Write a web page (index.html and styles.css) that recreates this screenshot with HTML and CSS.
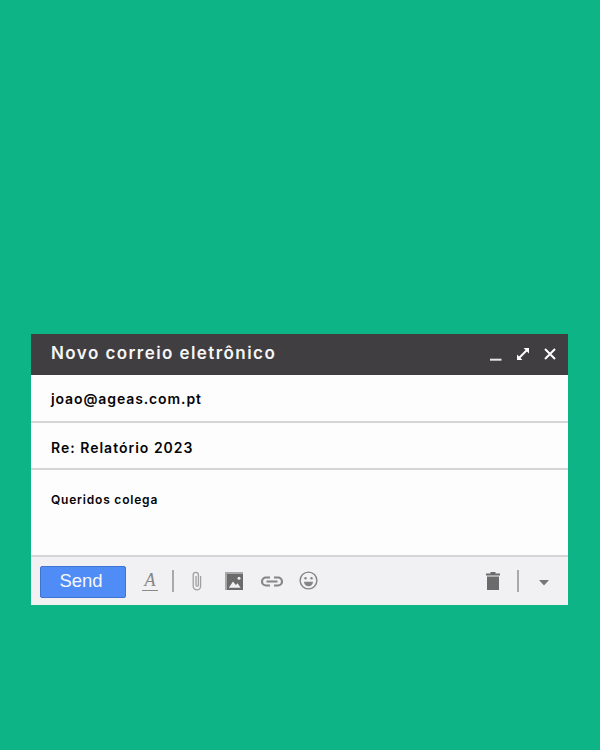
FILE: index.html
```html
<!DOCTYPE html>
<html lang="pt">
<head>
<meta charset="utf-8">
<title>Novo correio eletrônico</title>
<link rel="stylesheet" href="styles.css">
</head>
<body>
<main class="stage">
  <section class="compose">
    <header class="titlebar">
      <h1 class="title">Novo correio eletrônico</h1>
      <div class="winctl">
        <svg class="ctl" width="14" height="14" viewBox="0 0 14 14"><path d="M1 12.700h11.500" stroke="#e6e6e6" stroke-width="2"/></svg>
        <svg class="ctl" width="14" height="14" viewBox="0 0 14 14"><path d="M3 11 11 3" stroke="#fff" stroke-width="2"/><path d="M7.600 1h5.400v5.400zM1 7.600V13h5.400z" fill="#fff"/></svg>
        <svg class="ctl" width="14" height="14" viewBox="0 0 14 14"><path d="M2 2l10 10M12 2 2 12" stroke="#fff" stroke-width="2"/></svg>
      </div>
    </header>
    <div class="field field-to">joao@ageas.com.pt</div>
    <div class="field field-subject">Re: Relatório 2023</div>
    <div class="body-text">Queridos colega</div>
    <footer class="toolbar">
      <button class="send">Send</button>
      <span class="format">A</span>
      <span class="sep sep-a"></span>
      <svg class="ic ic-clip" width="14" height="22" viewBox="0 0 14 22"><path d="M10.600 6v10.200a3.700 3.700 0 0 1-7.400 0V5a2.600 2.600 0 0 1 5.200 0v10a1.200 1.200 0 0 1-2.400 0V6" fill="none" stroke="#a0a0a0" stroke-width="1.300"/></svg>
      <svg class="ic ic-photo" width="18" height="18" viewBox="0 0 18 18"><path d="M0 0h18v2H2v16H0z" fill="#a8a8a8"/><path d="M2 2h16v16H2z" fill="#6b6b6b"/><circle cx="14" cy="6.200" r="1.500" fill="#f1f0f2"/><path d="M3.800 15.800 8 9.500l2.800 3.500 1.800-1.700 3 4.500z" fill="#f1f0f2"/></svg>
      <svg class="ic ic-link" width="24" height="11" viewBox="0 0 24 11"><path d="M10 1.500H6a4 4 0 0 0 0 8h4M14 1.500h4a4 4 0 0 1 0 8h-4M6.500 5.500h11" fill="none" stroke="#858585" stroke-width="2.200"/></svg>
      <svg class="ic ic-emoji" width="19" height="19" viewBox="0 0 19 19"><circle cx="9.500" cy="9.500" r="8.400" fill="none" stroke="#858585" stroke-width="1.400"/><circle cx="6.500" cy="7.300" r="1.200" fill="#858585"/><circle cx="12.500" cy="7.300" r="1.200" fill="#858585"/><path d="M5 10.800h9a4.500 4.500 0 0 1-9 0z" fill="#858585"/></svg>
      <span class="spacer"></span>
      <svg class="ic ic-trash" width="14" height="18" viewBox="0 0 14 18"><path d="M4.500 0h5v1.500H14v2H0v-2h4.500zM1 4.500h12V18H1z" fill="#6b6b6b"/></svg>
      <span class="sep sep-b"></span>
      <svg class="ic ic-caret" width="10" height="6" viewBox="0 0 10 6"><path d="M0 0h10L5 5.500z" fill="#777"/></svg>
    </footer>
  </section>
</main>
</body>
</html>
```
FILE: styles.css
```css
* { box-sizing: border-box; }
html, body { margin: 0; height: 100%; }
body { background: #0db586; font-family: "Inter", "Liberation Sans", sans-serif; }
.stage { width: 600px; height: 750px; padding: 334px 32px 0 31px; }
.compose { display: flex; flex-direction: column; width: 537px; height: 271px; background: #fefdfe; }
.titlebar { display: flex; align-items: center; height: 41px; background: #403e41; padding: 0 11px 0 20px; }
.title { margin: 0 0 3px; flex: 1; color: #f6f6f6; font: 600 17px/1 "Inter", "Liberation Sans", sans-serif; letter-spacing: 1.430px; }
.winctl { display: flex; gap: 13px; margin-bottom: 1px; }
.field { display: flex; align-items: center; padding: 0 20px; border-bottom: 2px solid #d5d5d8; color: #050507; font-weight: 600; font-size: 14px; }
.field-to { height: 48px; letter-spacing: 0.890px; }
.field-subject { height: 47px; padding-top: 4px; letter-spacing: 1px; }
.body-text { height: 87px; padding: 22px 20px 0; border-bottom: 2px solid #d5d5d8; color: #050507; font-weight: 600; font-size: 12px; line-height: 15px; letter-spacing: 0.800px; }
.toolbar { display: flex; align-items: center; flex: 1; background: #f1f0f2; padding: 0 19px 0 9px; }
.send { width: 86px; height: 32px; margin: 1px 0 0; padding: 0 4px 0 0; border: 1px solid #3f74d0; border-radius: 2px; background: #4f8cf6; color: #f6f8fc; font: 400 18.500px/1 "Liberation Sans", sans-serif; }
.format { width: 16px; margin-left: 16px; border-bottom: 1px solid #8a8a8a; color: #858585; font: italic 18px/19px "Liberation Serif", serif; text-align: center; }
.sep { width: 2px; height: 22px; background: #a9a9ab; }
.sep-a { margin-left: 14px; }
.ic { display: block; flex: none; }
.ic-clip { margin-left: 16px; }
.ic-photo { margin-left: 21px; }
.ic-link { margin-left: 17px; }
.ic-emoji { margin-left: 15px; margin-top: -1px; }
.spacer { flex: 1; }
.ic-trash { margin-right: -1px; }
.sep-b { margin-left: 18px; }
.ic-caret { margin-left: 20px; margin-top: 3px; }
```
